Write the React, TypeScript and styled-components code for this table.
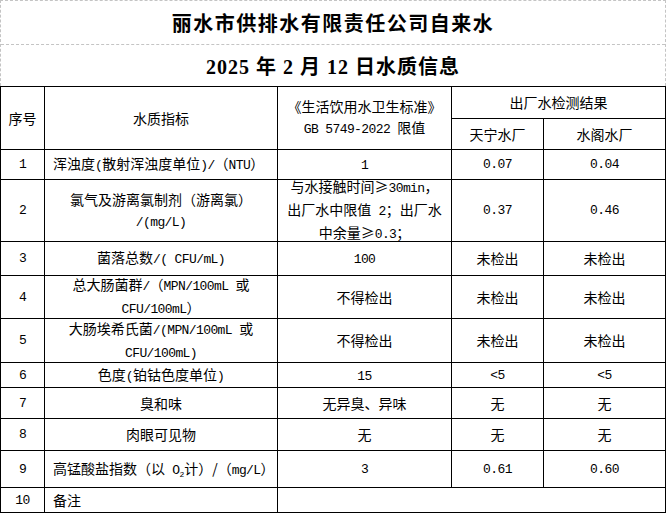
import React from "react";
import styled, { createGlobalStyle } from "styled-components";

const Global = createGlobalStyle`
  html, body { margin: 0; padding: 0; background: #fff; }
  body { font-family: "Noto Sans CJK SC", sans-serif; color: #000; }
`;

const Page = styled.div`
  width: 666px;
`;

const TitleBox = styled.div`
  box-sizing: border-box;
  width: 666px;
  border: 1px dashed #c4c4c4;
  border-bottom: none;
  display: grid;
  grid-template-rows: 44px 41px;
`;

const TitleRow = styled.div<{ $divider?: boolean }>`
  box-sizing: border-box;
  display: flex;
  align-items: center;
  justify-content: center;
  border-bottom: ${(p) => (p.$divider ? "1px dashed #c4c4c4" : "none")};
  font-family: "Liberation Serif", "Noto Sans CJK SC", serif;
  font-weight: 700;
  font-size: 20px;
  letter-spacing: ${(p) => (p.$divider ? "1.5px" : "1px")};
  white-space: nowrap;
`;

const Table = styled.div`
  box-sizing: border-box;
  width: 666px;
  display: grid;
  grid-template-columns: 44px 233px 174px 92px 122px;
  grid-template-rows: 32px 31px 30px 62px 34px 43px 44px 25px 31px 32px 37px 25px;
  border-left: 1px solid #000;
  border-top: 1px solid #000;
`;

const Cell = styled.div<{ $align?: "left" | "center"; $rowSpan?: number; $colSpan?: number }>`
  box-sizing: border-box;
  min-height: 0;
  border-right: 1px solid #000;
  border-bottom: 1px solid #000;
  display: flex;
  align-items: center;
  justify-content: ${(p) => (p.$align === "left" ? "flex-start" : "center")};
  text-align: ${(p) => (p.$align === "left" ? "left" : "center")};
  padding-left: ${(p) => (p.$align === "left" ? "8px" : "0")};
  grid-row: span ${(p) => p.$rowSpan ?? 1};
  grid-column: span ${(p) => p.$colSpan ?? 1};
  font-family: "Noto Sans CJK SC", sans-serif;
  font-size: 14px;
  line-height: 21px;
  white-space: nowrap;
`;

const CellText = styled.span`
  display: block;
`;

const Latin = styled.span`
  font-family: "Liberation Mono", monospace;
  font-size: 13px;
  letter-spacing: -0.6px;
`;

const Sub = styled.sub`
  font-family: "Liberation Mono", monospace;
  font-size: 8px;
  line-height: 0;
  vertical-align: -3px;
`;

function mix(text: string): React.ReactNode[] {
  return text
    .split(/([\x20-\x7E]+)/)
    .filter((s) => s.length > 0)
    .map((s, i) => (/^[\x20-\x7E]+$/.test(s) ? <Latin key={i}>{s}</Latin> : <React.Fragment key={i}>{s}</React.Fragment>));
}

function Lines({ lines }: { lines: string[] }) {
  return (
    <CellText>
      {lines.map((l, i) => (
        <React.Fragment key={i}>
          {i > 0 && <br />}
          {mix(l)}
        </React.Fragment>
      ))}
    </CellText>
  );
}

type Row = {
  no: string;
  name: string[];
  nameAlign?: "left" | "center";
  std: string[];
  a: string;
  b: string;
};

const rows: Row[] = [
  { no: "1", name: ["浑浊度(散射浑浊度单位)/（NTU）"], nameAlign: "left", std: ["1"], a: "0.07", b: "0.04" },
  {
    no: "2",
    name: ["氯气及游离氯制剂（游离氯）", "/(mg/L)"],
    std: ["与水接触时间≥30min，", "出厂水中限值 2；出厂水", "中余量≥0.3；"],
    a: "0.37",
    b: "0.46",
  },
  { no: "3", name: ["菌落总数/( CFU/mL)"], std: ["100"], a: "未检出", b: "未检出" },
  { no: "4", name: ["总大肠菌群/（MPN/100mL 或", "CFU/100mL）"], std: ["不得检出"], a: "未检出", b: "未检出" },
  { no: "5", name: ["大肠埃希氏菌/(MPN/100mL 或", "CFU/100mL)"], std: ["不得检出"], a: "未检出", b: "未检出" },
  { no: "6", name: ["色度(铂钴色度单位)"], std: ["15"], a: "<5", b: "<5" },
  { no: "7", name: ["臭和味"], std: ["无异臭、异味"], a: "无", b: "无" },
  { no: "8", name: ["肉眼可见物"], std: ["无"], a: "无", b: "无" },
];

export default function App() {
  return (
    <Page>
      <Global />
      <TitleBox>
        <TitleRow $divider>丽水市供排水有限责任公司自来水</TitleRow>
        <TitleRow>2025 年 2 月 12 日水质信息</TitleRow>
      </TitleBox>
      <Table>
        <Cell $rowSpan={2}>序号</Cell>
        <Cell $rowSpan={2}>水质指标</Cell>
        <Cell $rowSpan={2}>
          <Lines lines={["《生活饮用水卫生标准》", "GB 5749-2022 限值"]} />
        </Cell>
        <Cell $colSpan={2}>出厂水检测结果</Cell>
        <Cell>天宁水厂</Cell>
        <Cell>水阁水厂</Cell>

        {rows.map((r) => (
          <React.Fragment key={r.no}>
            <Cell>{mix(r.no)}</Cell>
            <Cell $align={r.nameAlign}>
              <Lines lines={r.name} />
            </Cell>
            <Cell>
              <Lines lines={r.std} />
            </Cell>
            <Cell>{mix(r.a)}</Cell>
            <Cell>{mix(r.b)}</Cell>
          </React.Fragment>
        ))}

        <Cell>{mix("9")}</Cell>
        <Cell $align="left">
          <CellText>
            高锰酸盐指数（以<Latin> O</Latin>
            <Sub>2</Sub>计）/（<Latin>mg/L</Latin>）
          </CellText>
        </Cell>
        <Cell>{mix("3")}</Cell>
        <Cell>{mix("0.61")}</Cell>
        <Cell>{mix("0.60")}</Cell>

        <Cell>{mix("10")}</Cell>
        <Cell $align="left">备注</Cell>
        <Cell $colSpan={3} />
      </Table>
    </Page>
  );
}
